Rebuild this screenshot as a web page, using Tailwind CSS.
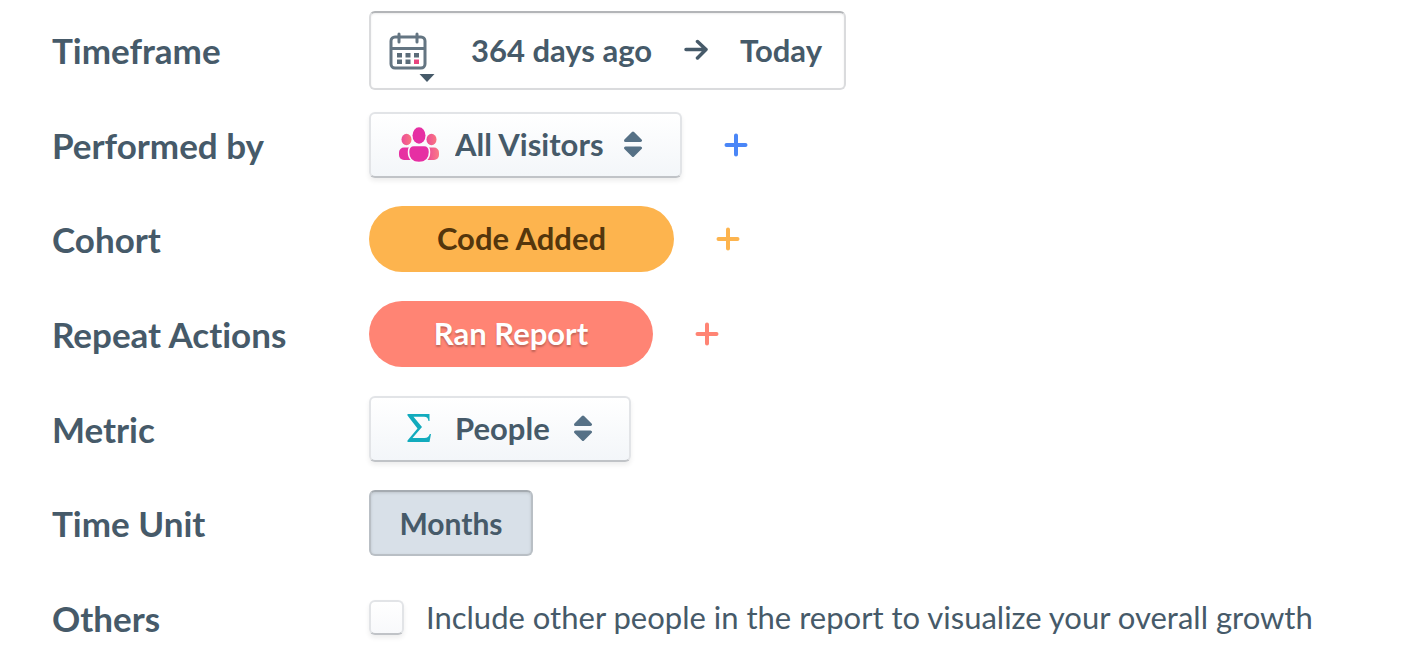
<!DOCTYPE html>
<html lang="en">
<head>
  <meta charset="UTF-8">
  <meta name="viewport" content="width=device-width, initial-scale=1">
  <title>Cohort Report</title>
  <script src="https://cdn.jsdelivr.net/npm/@tailwindcss/browser@4"></script>
</head>
<body class="bg-white text-[#465a69] font-['Lato','Open_Sans',sans-serif] [font-variant-ligatures:none]">
  <!-- Report settings: one label/control row per option -->
  <form class="grid min-h-screen auto-rows-fr grid-cols-[317px_1fr] items-center pl-[52px] pt-[3px] pb-px text-[31px] leading-10 font-bold">

    <!-- Timeframe -->
    <label for="timeframe" class="text-[35px]">Timeframe</label>
    <div class="flex items-center">
      <button type="button" id="timeframe" class="flex h-[79px] w-[477px] items-center justify-between rounded-md border-2 border-[#dadbdd] border-t-[#b3b5b8] bg-white pl-[18px] pr-[22px] shadow-[inset_0_1px_2px_#00000014]">
        <svg class="h-[66px] w-[50px]" viewBox="0 0 50 66" fill="none" aria-hidden="true">
          <rect x="2" y="20" width="34" height="31" rx="4" stroke="#647582" stroke-width="3"/>
          <path d="M2 31.500H36" stroke="#647582" stroke-width="3"/>
          <path d="M10 17V25M28 17V25" stroke="#647582" stroke-width="3" stroke-linecap="round"/>
          <path d="M8 36h5v4.500H8zM16.500 36h5v4.500h-5zM25 36h5v4.500h-5zM8 42.500h5V47H8zM16.500 42.500h5V47h-5z" fill="#5b6c79"/>
          <path d="M25 42.500h5V47h-5z" fill="#e8457f"/>
          <path d="M30.500 57H45.500L38 65z" fill="#465a69"/>
        </svg>
        <span>364 days ago</span>
        <svg class="h-6 w-6" viewBox="0 0 24 24" fill="none" stroke="#465a69" stroke-width="3.500" stroke-linecap="round" stroke-linejoin="round" aria-hidden="true">
          <path d="M2 11.500H22M13.500 3.500L22 11.500L13.500 20"/>
        </svg>
        <span>Today</span>
      </button>
    </div>

    <!-- Performed by -->
    <label for="performed-by" class="text-[35px]">Performed by</label>
    <div class="flex items-center gap-[42px]">
      <div class="relative">
        <select id="performed-by" class="h-[66px] w-[313px] appearance-none rounded-md border-2 border-[#e2e4e7] border-b-[#c0c3c7] bg-linear-to-b from-white to-[#f3f6f9] pl-[84px] pb-0.5 shadow-[0_3px_5px_#00000012]">
          <option>All Visitors</option>
        </select>
        <svg class="pointer-events-none absolute left-[29px] top-[15px] h-9 w-[42px]" viewBox="0 0 42 36" aria-hidden="true">
          <defs>
            <linearGradient id="crowd" x1="0" x2="42" y1="0" y2="0" gradientUnits="userSpaceOnUse">
              <stop offset="0" stop-color="#e62fa3"/>
              <stop offset="0.6" stop-color="#e83a9e"/>
              <stop offset="1" stop-color="#fb7f83"/>
            </linearGradient>
            <linearGradient id="head" x1="0" x2="1" y1="0" y2="0">
              <stop offset="0" stop-color="#ec4c9a"/>
              <stop offset="1" stop-color="#f9757f"/>
            </linearGradient>
          </defs>
          <ellipse cx="8.500" cy="12.500" rx="5" ry="5.800" fill="url(#head)"/>
          <ellipse cx="33.500" cy="12.500" rx="5" ry="5.800" fill="url(#head)"/>
          <rect x="1" y="20.500" width="17" height="12.500" rx="5" fill="url(#crowd)"/>
          <rect x="24" y="20.500" width="17" height="12.500" rx="5" fill="url(#crowd)"/>
          <ellipse cx="21" cy="8.500" rx="6.500" ry="8.300" fill="#e62fa3"/>
          <path d="M16 18.500H26C30 18.500 31.500 21 31.500 25C31.500 32 27 35.500 21 35.500C15 35.500 10.500 32 10.500 25C10.500 21 12 18.500 16 18.500Z" fill="#e62fa3" stroke="#fafbfd" stroke-width="1.500"/>
        </svg>
        <svg class="pointer-events-none absolute right-[39px] top-[19px] h-[27px] w-5" viewBox="0 0 20 27" fill="#567186" stroke="#567186" stroke-width="3" stroke-linejoin="round" aria-hidden="true">
          <path d="M2.500 9.500L10 2L17.500 9.500zM2.500 17L10 24.500L17.500 17z"/>
        </svg>
      </div>
      <button type="button" aria-label="Add visitor filter">
        <svg class="h-6 w-6" viewBox="0 0 24 24" stroke="#4a86f7" stroke-width="4" stroke-linecap="round" aria-hidden="true"><path d="M12 2.500V21.500M2.500 12H21.500"/></svg>
      </button>
    </div>

    <!-- Cohort -->
    <label for="cohort" class="text-[35px]">Cohort</label>
    <div class="flex items-center gap-[42px]">
      <button type="button" id="cohort" class="h-[66px] w-[305px] rounded-full bg-[#fdb44e] pb-0.5 text-[#54360c]">Code Added</button>
      <button type="button" aria-label="Add cohort event">
        <svg class="h-6 w-6" viewBox="0 0 24 24" stroke="#fdb44e" stroke-width="4" stroke-linecap="round" aria-hidden="true"><path d="M12 2.500V21.500M2.500 12H21.500"/></svg>
      </button>
    </div>

    <!-- Repeat actions -->
    <label for="repeat-actions" class="text-[35px]">Repeat Actions</label>
    <div class="flex items-center gap-[42px]">
      <button type="button" id="repeat-actions" class="h-[66px] w-[284px] rounded-full bg-[#ff8474] pb-0.5 text-white text-shadow-[0_2px_2px_#00000040]">Ran Report</button>
      <button type="button" aria-label="Add repeat action">
        <svg class="h-6 w-6" viewBox="0 0 24 24" stroke="#ff8474" stroke-width="4" stroke-linecap="round" aria-hidden="true"><path d="M12 2.500V21.500M2.500 12H21.500"/></svg>
      </button>
    </div>

    <!-- Metric -->
    <label for="metric" class="text-[35px]">Metric</label>
    <div class="flex items-center">
      <div class="relative">
        <select id="metric" class="h-[66px] w-[262px] appearance-none rounded-md border-2 border-[#e2e4e7] border-b-[#c0c3c7] bg-linear-to-b from-white to-[#f3f6f9] pl-[84px] pb-0.5 shadow-[0_3px_5px_#00000012]">
          <option>People</option>
        </select>
        <svg class="pointer-events-none absolute left-[38px] top-[18px] h-7 w-6" viewBox="0 0 24 28" fill="#12abbd" aria-hidden="true">
          <path d="M0.500 0H22.500V7H21.500C21 4 20 2.800 17 2.800H6.500L15 13L5.500 24H17.500C20.500 24 21.800 22.500 22.800 20H24L22.500 28H0.500V26.500L10.500 14.500L0.500 1.500z"/>
        </svg>
        <svg class="pointer-events-none absolute right-[38px] top-[19px] h-[27px] w-5" viewBox="0 0 20 27" fill="#567186" stroke="#567186" stroke-width="3" stroke-linejoin="round" aria-hidden="true">
          <path d="M2.500 9.500L10 2L17.500 9.500zM2.500 17L10 24.500L17.500 17z"/>
        </svg>
      </div>
    </div>

    <!-- Time unit -->
    <label for="time-unit" class="text-[35px]">Time Unit</label>
    <div class="flex items-center">
      <button type="button" id="time-unit" aria-pressed="true" class="h-[66px] w-[164px] rounded-md border-2 border-[#b9bfc5] border-t-[#a5abb1] bg-[#d8e0e8] text-[30px] shadow-[inset_0_1px_3px_#00000020]">Months</button>
    </div>

    <!-- Others -->
    <span class="text-[35px]">Others</span>
    <div class="flex items-center gap-[22px]">
      <input type="checkbox" id="others" class="size-[35px] appearance-none rounded-md border-2 border-[#e2e4e7] border-b-[#c0c3c7] bg-linear-to-b from-white to-[#f8f9fb] shadow-[0_3px_5px_#00000012]">
      <label for="others" class="pb-0.5 font-normal">Include other people in the report to visualize your overall growth</label>
    </div>
  </form>
</body>
</html>
